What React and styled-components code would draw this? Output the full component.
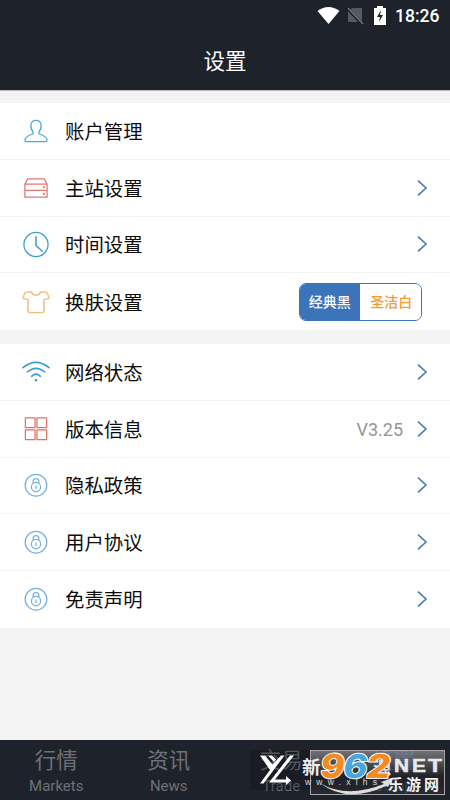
import styled, { createGlobalStyle } from "styled-components";

const GlobalStyle = createGlobalStyle`
  * {
    box-sizing: border-box;
  }

  body {
    margin: 0;
    background: #f3f3f3;
    font-family: Roboto, "Noto Sans CJK SC", sans-serif;
  }
`;

const Screen = styled.div`
  display: flex;
  flex-direction: column;
  position: relative;
  width: 450px;
  height: 800px;
  overflow: hidden;
  background: #f3f3f3;
`;

const Header = styled.header`
  height: 91px;
  flex: none;
  background: #1e222a;
  border-bottom: 1px solid #b8babd;
  color: #fff;
`;

const StatusBar = styled.div`
  display: flex;
  align-items: center;
  justify-content: flex-end;
  height: 30px;
  padding: 1px 11px 0 0;
`;

const Time = styled.span`
  width: 44px;
  margin-left: 3px;
  font-size: 17.5px;
  font-weight: 500;
  line-height: 30px;
  white-space: nowrap;
`;

const Title = styled.h1`
  margin: 0;
  padding-top: 1px;
  font-size: 21.5px;
  font-weight: 400;
  line-height: 61px;
  text-align: center;
`;

const Group = styled.section`
  flex: none;
  margin-top: ${(props) => props.$top}px;
  background: #fff;
`;

const Row = styled.div`
  display: flex;
  align-items: center;
  height: 56.75px;
  padding: 0 22px;
  border-bottom: 1px solid #f3f3f3;

  &:last-child {
    border-bottom: none;
  }
`;

const IconSlot = styled.div`
  display: flex;
  width: 28px;
  height: 28px;
  margin-right: 14px;
`;

const Label = styled.span`
  flex: 1;
  padding-top: 4px;
  padding-left: 1px;
  font-size: 19.4px;
  line-height: 30px;
  color: #0c0c0c;
`;

const Value = styled.span`
  margin-right: 14px;
  padding-top: 2px;
  font-size: 18px;
  color: #959595;
`;

const Toggle = styled.div`
  display: flex;
  width: 123px;
  height: 38px;
  margin-right: 6px;
  border: 1.5px solid #3b74b8;
  border-radius: 7px;
  overflow: hidden;
`;

const Option = styled.span`
  flex: 1;
  padding-left: ${(props) => (props.$active ? 0 : 2)}px;
  font-size: 14px;
  font-weight: 500;
  line-height: 36px;
  text-align: center;
  color: ${(props) => (props.$active ? "#fff" : "#f59a35")};
  background: ${(props) => (props.$active ? "#3b74b8" : "#fff")};
`;

const TabBar = styled.nav`
  display: grid;
  grid-template-columns: repeat(4, 1fr);
  flex: none;
  height: 60px;
  margin-top: auto;
  background: #1e222a;
`;

const Tab = styled.div`
  display: flex;
  flex-direction: column;
  align-items: center;
  color: ${(props) => (props.$active ? "#2f68b0" : "#6d7178")};
`;

const TabName = styled.span`
  height: 33px;
  font-size: 21.5px;
  line-height: 41px;
`;

const TabSub = styled.span`
  font-size: 15px;
  line-height: 26px;
`;

/* Site stamps laid over the tab bar */
const DarkStamp = styled.div`
  position: absolute;
  left: 250px;
  top: 750px;
  width: 195px;
  height: 40px;
  background: rgba(16, 18, 22, 0.3);
`;

const SilverStamp = styled.div`
  position: absolute;
  left: 310px;
  top: 750px;
  width: 135px;
  height: 45px;
  border: 1px solid #a6a6a8;
  background: linear-gradient(rgba(160, 160, 160, 0.65), rgba(40, 40, 42, 0.45) 60%, rgba(45, 47, 50, 0.6));
`;

const StampArt = styled.svg`
  position: absolute;
  left: 250px;
  top: 745px;
  font-family: "Liberation Sans", "Noto Sans CJK SC", sans-serif;
`;

const StatusIcons = () => (
  <svg width="76" height="24" viewBox="0 0 76 24">
    <path d="M1.5 7Q12.5 -1 23.5 7L12.5 20Z" fill="#fff" />
    <path d="M36 4h10v14H32V8z" fill="#555960" />
    <path d="M31 4l16 17" stroke="#1e222a" strokeWidth="3" />
    <path d="M32 4l15 16" stroke="#74777b" strokeWidth="1.3" />
    <path d="M58 4h3V2h6v2h3v17H58z" fill="#fff" />
    <path d="M65 6l-4 7h3l-1 5 4-7h-3z" fill="#1e222a" />
  </svg>
);

const paths = {
  user: (
    <g stroke="#4dabd8">
      <path d="M11.5 16.5V15C8 11 8 3 14.5 3S21 11 17.5 15V16.5C20 18.5 26 19 26 23.5Q26 25 24.5 25H4.5Q3 25 3 23.5C3 19 9 18.5 11.5 16.5Z" />
    </g>
  ),
  server: (
    <g stroke="#e47872">
      <path d="M3 10L6 4.5H23L26 10V23.5H3V10H26M3 16.5H26" />
      <path d="M22.5 13.3h.5M22.5 20h.5" strokeWidth="2" />
    </g>
  ),
  clock: (
    <g stroke="#3a9ecd">
      <circle cx="14.5" cy="14.5" r="12.5" />
      <path d="M14.5 6.5V15.5L21 21.5" strokeWidth="1.6" />
    </g>
  ),
  shirt: (
    <g stroke="#f1bb78" strokeWidth="1.5">
      <path d="M9.5 3.5C11.5 8 17.5 8 19.5 3.5L25 4Q27.5 5.5 27.5 10.5L22.5 11.5L23 22.5Q23 25 20.5 25H8.5Q6 25 6 22.5L6.5 11.5L1.5 10.5Q1.5 5.5 4 4Z" />
    </g>
  ),
  wifi: (
    <g stroke="#38a0cd" strokeWidth="1.6">
      <path d="M1 9.5Q14.5 -1.5 28 9.5M5.5 14Q14.5 6.5 23.5 14M10 18.5Q14.5 14 19 18.5" />
      <circle cx="14.5" cy="22.5" r=".6" />
    </g>
  ),
  grid: (
    <g stroke="#e27168">
      <path d="M3.5 2.5h10v10h-10zM15.5 2.5h10v10h-10zM3.5 15h10v10h-10zM15.5 15h10v10h-10z" />
    </g>
  ),
  lock: (
    <g stroke="#79b1df">
      <circle cx="14.5" cy="14.2" r="11.2" />
      <circle cx="14.5" cy="16.2" r="4.8" />
      <path d="M11.5 12V10.5Q11.5 7.5 14.5 7.5T17.5 10.5V12M14.5 15v2.5" />
    </g>
  ),
};

const RowIcon = ({ name }) => (
  <IconSlot>
    <svg width="29" height="28" viewBox="0 0 29 28" fill="none" strokeWidth="1.3" strokeLinejoin="round" strokeLinecap="round">
      {paths[name]}
    </svg>
  </IconSlot>
);

const Chevron = () => (
  <svg width="11" height="18" viewBox="0 0 11 18" fill="none" stroke="#477bb5" strokeWidth="1.6">
    <path d="M1 1.7L9 9L1 16.3" />
  </svg>
);

const SettingRow = ({ icon, label, value, arrow = true, children }) => (
  <Row>
    <RowIcon name={icon} />
    <Label>{label}</Label>
    {value && <Value>{value}</Value>}
    {children}
    {arrow && <Chevron />}
  </Row>
);

const tabs = [
  ["行情", "Markets"],
  ["资讯", "News"],
  ["交易", "Trade"],
  ["设置", "Setup"],
];

const Stamps = () => (
  <>
    <DarkStamp />
    <SilverStamp />
    <StampArt width="200" height="55" viewBox="0 0 200 55">
      <g fill="#fff">
        <path d="M10 10.5H15L22.500 19.500L31 10.5H34.5L13.500 38.5H10L20 25Z" />
        <path d="M40 10.5H44L25 34.500H36V31L41 35.5L36 40V37.5H19Z" />
        <path d="M18 10.5H22L26 14.500L24 17Z" />
      </g>
      <text x="52" y="29" fontSize="18.5" fontWeight="700" fill="#eee">新</text>
      <text x="123" y="30" fontSize="18" fontWeight="700" fill="#ddd">源</text>
      <text x="55" y="40" fontSize="8.5" textLength="72" fill="#ddd">www.xlhs</text>
      <path d="M70 38Q96 54 134 39L131 37 142 33 138 42 136 41Q97 59 70 38Z" fill="#ddd" />
      <g
        fontFamily="Inter, Roboto, sans-serif"
        fontSize="33"
        fontWeight="800"
        stroke="#fff"
        strokeWidth="2"
        strokeLinejoin="round"
        paintOrder="stroke"
        transform="translate(0 33) skewX(-9)"
      >
        <text x="69" y="0" textLength="24" lengthAdjust="spacingAndGlyphs" fill="#f58a22">9</text>
        <text x="92" y="0" textLength="24" lengthAdjust="spacingAndGlyphs" fill="#4aa5dc">6</text>
        <text x="115" y="0" textLength="24" lengthAdjust="spacingAndGlyphs" fill="#f58a22">2</text>
      </g>
      <g fontSize="18" fontWeight="700" fill="#e8e8e8" stroke="#e8e8e8" strokeWidth=".5">
        <text x="144" y="27" textLength="15" lengthAdjust="spacingAndGlyphs">N</text>
        <text x="162" y="27" textLength="14" lengthAdjust="spacingAndGlyphs">E</text>
        <text x="178" y="27" textLength="14" lengthAdjust="spacingAndGlyphs">T</text>
      </g>
      <text x="138" y="45" fontSize="15" fontWeight="700" textLength="51" fill="#f2f2f2">乐游网</text>
    </StampArt>
  </>
);

const App = () => (
  <Screen>
    <GlobalStyle />
    <Header>
      <StatusBar>
        <StatusIcons />
        <Time>18:26</Time>
      </StatusBar>
      <Title>设置</Title>
    </Header>
    <Group $top={12}>
      <SettingRow icon="user" label="账户管理" arrow={false} />
      <SettingRow icon="server" label="主站设置" />
      <SettingRow icon="clock" label="时间设置" />
      <SettingRow icon="shirt" label="换肤设置" arrow={false}>
        <Toggle>
          <Option $active>经典黑</Option>
          <Option>圣洁白</Option>
        </Toggle>
      </SettingRow>
    </Group>
    <Group $top={14}>
      <SettingRow icon="wifi" label="网络状态" />
      <SettingRow icon="grid" label="版本信息" value="V3.25" />
      <SettingRow icon="lock" label="隐私政策" />
      <SettingRow icon="lock" label="用户协议" />
      <SettingRow icon="lock" label="免责声明" />
    </Group>
    <TabBar>
      {tabs.map(([name, sub], i) => (
        <Tab key={sub} $active={i === 3}>
          <TabName>{name}</TabName>
          <TabSub>{sub}</TabSub>
        </Tab>
      ))}
    </TabBar>
    <Stamps />
  </Screen>
);

export default App;
